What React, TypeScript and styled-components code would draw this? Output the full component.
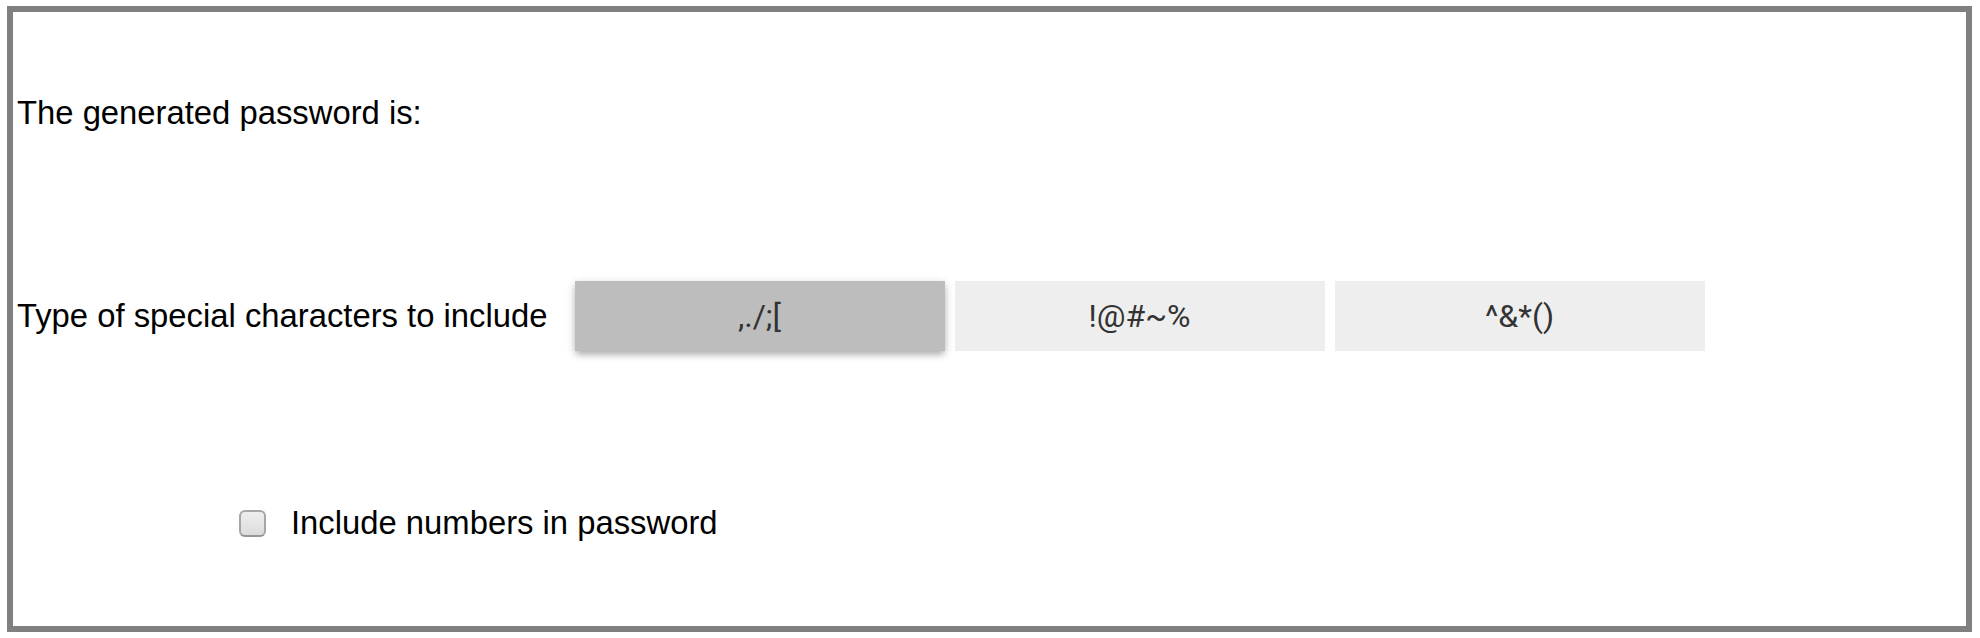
import { useState } from "react";
import styled, { createGlobalStyle } from "styled-components";

const GlobalStyle = createGlobalStyle`
    html, body {
        margin: 0;
        padding: 0;
        background: #fff;
    }
    body {
        font-family: "Liberation Sans", Arial, sans-serif;
        color: #000;
    }
`;

const Card = styled.section`
    box-sizing: border-box;
    width: 1965px;
    height: 626px;
    margin: 6px 0 0 7px;
    border: 6px solid #808080;
    padding: 82px 0 0 4px;
    display: flex;
    flex-direction: column;
    font-size: 32.8px;
`;

const Line = styled.p`
    margin: 0;
    line-height: 37px;
`;

const SpecialRow = styled.div`
    display: flex;
    align-items: center;
    margin-top: 150px;
    height: 70px;
`;

const RowLabel = styled.span`
    margin-right: 27px;
    white-space: nowrap;
`;

const ButtonGroup = styled.div`
    display: flex;
    column-gap: 10px;
    height: 100%;
`;

const CharButton = styled.button<{ $active: boolean }>`
    width: 370px;
    height: 70px;
    border: none;
    border-radius: 0;
    padding: 0;
    cursor: pointer;
    font-family: Roboto, "Liberation Sans", sans-serif;
    font-size: 32px;
    color: #333;
    background: ${(p) => (p.$active ? "#bdbdbd" : "#eeeeee")};
    box-shadow: ${(p) =>
        p.$active
            ? "0 4px 7px -1px rgba(0,0,0,0.28), 0 2px 10px rgba(0,0,0,0.12)"
            : "none"};
`;

const CheckRow = styled.label`
    display: flex;
    align-items: center;
    column-gap: 25px;
    margin-top: 153px;
    padding-left: 222px;
    height: 38px;
    cursor: pointer;
`;

const Check = styled.input`
    appearance: none;
    box-sizing: border-box;
    width: 27px;
    height: 27px;
    margin: 0;
    border: 2px solid #a6a6a6;
    border-bottom-color: #959595;
    border-radius: 6px;
    background: linear-gradient(#eeeeee, #dcdcdc);
    &:checked {
        background: linear-gradient(#5ea6f8, #2f7ef2);
        border-color: #2f6fd0;
    }
`;

const specials = [",./;[", "!@#~%", "^&*()"];

const App = () => {
    const [selected, setSelected] = useState(0);
    const [numbers, setNumbers] = useState(false);

    return (<>
        <GlobalStyle />
        <Card>
            <Line>The generated password is:</Line>

            <SpecialRow>
                <RowLabel>Type of special characters to include</RowLabel>
                <ButtonGroup>
                    {specials.map((s, i) => (
                        <CharButton key={s} $active={selected === i} onClick={() => setSelected(i)}>
                            {s}
                        </CharButton>
                    ))}
                </ButtonGroup>
            </SpecialRow>

            <CheckRow>
                <Check type="checkbox" checked={numbers} onChange={() => setNumbers(!numbers)} />
                Include numbers in password
            </CheckRow>
        </Card>
    </>)
}
export default App
